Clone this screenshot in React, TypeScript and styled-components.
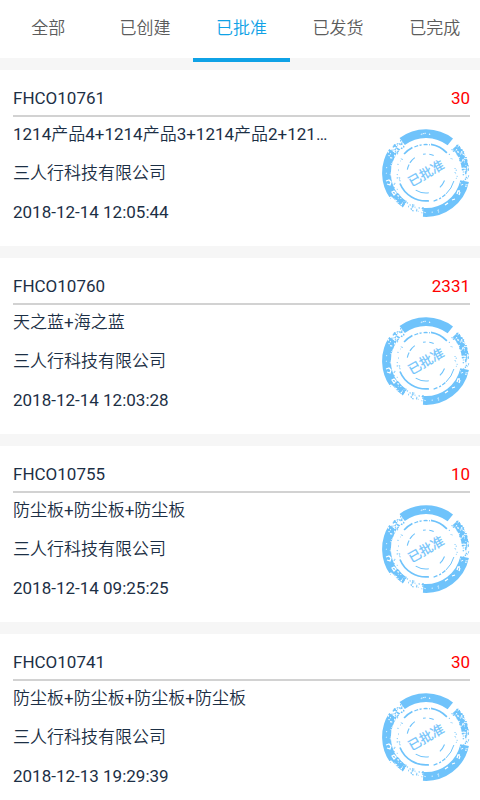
import React, { useState } from "react";
import styled, { createGlobalStyle } from "styled-components";

const GlobalStyle = createGlobalStyle`
  * { box-sizing: border-box; }
  body {
    margin: 0;
    background: #f6f6f6;
    color: #1c2f45;
    font-family: Roboto, "Noto Sans CJK SC DemiLight", "Noto Sans CJK SC Light", "Noto Sans CJK SC", sans-serif;
    font-size: 17px;
    line-height: 24px;
  }
`;

const Page = styled.main`
  overflow: hidden;
`;

const TabBar = styled.nav`
  display: grid;
  grid-template-columns: repeat(5, 1fr);
  height: 58px;
  margin-right: -3px;
  background: #fff;
`;

const Tab = styled.button<{ $active: boolean }>`
  height: 62px;
  padding: 0 0 2px;
  border: 0;
  border-bottom: 4px solid ${(p) => (p.$active ? "#0fa2e6" : "transparent")};
  background: none;
  color: ${(p) => (p.$active ? "#0fa2e6" : "#5c5c5c")};
  font: inherit;
  cursor: pointer;
`;

const OrderList = styled.ul`
  display: grid;
  gap: 12px;
  margin: 12px 0 0;
  padding: 0;
  list-style: none;
`;

const OrderCard = styled.li`
  padding: 10px 10px 22px 13px;
  background: #fff;
`;

const CardHeader = styled.header`
  display: flex;
  justify-content: space-between;
  align-items: center;
  height: 37px;
  border-bottom: 2px solid #d2d2d2;
`;

const Amount = styled.span`
  color: #f00;
`;

const CardBody = styled.div`
  display: flex;
  justify-content: space-between;
  align-items: flex-start;
`;

const Details = styled.div`
  display: grid;
  gap: 15px;
  padding-top: 5px;
`;

const Line = styled.span`
  white-space: nowrap;
`;

const StampDrawing = styled.svg`
  flex: none;
  width: 88px;
  height: 88px;
  margin-top: 12px;
`;

const StampText = styled.text`
  font-family: "Noto Sans CJK SC", sans-serif;
  font-size: 13px;
  font-weight: 400;
`;

const INK = "#6fc3fb";
const CENTER = 44;

function point(radius: number, degrees: number) {
  const a = (degrees * Math.PI) / 180;
  return [CENTER + radius * Math.cos(a), CENTER + radius * Math.sin(a)].map((n) => n.toFixed(1)).join(" ");
}

function arc(radius: number, from: number, to: number) {
  const large = to - from > 180 ? 1 : 0;
  return `M${point(radius, from)}A${radius} ${radius} 0 ${large} 1 ${point(radius, to)}`;
}

// Repeatable grains of ink scattered over a sector of a ring.
function grains(seed: number, from: number, to: number, inner: number, outer: number, count: number, max: number) {
  let state = seed;
  const next = () => {
    state = (state * 16807) % 2147483647;
    return state / 2147483647;
  };
  next();
  next();
  let d = "";
  for (let i = 0; i < count; i++) {
    const w = 0.6 + next() * max;
    const h = 0.6 + next() * max;
    const p = point(inner + next() * (outer - inner), from + next() * (to - from));
    d += `M${p}l${w.toFixed(1)} ${(h / 3).toFixed(1)}l${(-w / 3).toFixed(1)} ${h.toFixed(1)}l${(-w).toFixed(1)} ${(-h / 2).toFixed(1)}z`;
  }
  return d;
}

const solidBand = [arc(39.5, -127, -52), arc(39.5, 12, 94), arc(39.5, 144, 213)].join("");
const wornBand = [arc(39.5, -42, -4), arc(38, 124, 145)].join("");
const middleRing = [arc(29, -139, -118), arc(29, -80, -44), arc(28, 84, 158)].join("");
const middleDashes = [arc(28.5, -114, -82), arc(29, 48, 77)].join("");
const middleThin = arc(29, 16, 46);
const innerRing = [
  arc(19, -170, -153),
  arc(19, -148, -126),
  arc(19, -99, -91),
  arc(19, -80, -66),
  arc(20, 82, 121),
  arc(20, 22, 46),
].join("");

const inkGrains = [
  grains(71, -44, 12, 35, 43, 60, 1),
  grains(19, 94, 144, 34, 40, 34, 1.2),
  grains(33, 213, 233, 35, 43, 34, 1.2),
  grains(57, 165, 212, 27, 30, 12, 0.6),
  grains(83, -40, 12, 28, 31, 9, 0.6),
  grains(91, 120, 165, 33, 35, 8, 0.6),
].join("");

const bareGrains = [
  grains(11, -42, 0, 35, 44, 60, 1),
  grains(43, 124, 146, 34, 43, 16, 1.2),
  grains(65, 174, 203, 35, 43, 10, 0.6),
  grains(77, 203, 214, 35, 44, 14, 1),
  grains(27, 66, 94, 38, 41, 7, 0.6),
  grains(52, 12, 20, 35, 44, 6, 0.8),
  grains(39, -105, -80, 39, 41, 5, 0.6),
].join("");

function Stamp() {
  return (
    <StampDrawing viewBox="0 0 88 88" role="img" aria-label="已批准">
      <g fill="none" stroke={INK}>
        <path d={solidBand} strokeWidth="8.8" />
        <path d={wornBand} strokeWidth="7" />
        <path d={middleRing} strokeWidth="1.7" />
        <path d={middleDashes} strokeWidth="1.3" strokeDasharray="4 1.5 2 2" />
        <path d={middleThin} strokeWidth="1" />
        <path d={innerRing} strokeWidth="1.1" />
      </g>
      <path d={bareGrains} fill="#fff" />
      <path d={inkGrains} fill={INK} />
      <g fill="none" stroke="#fff" strokeWidth="1.3">
        <path d="M4 52l3-1 2 2-1 3-3-1M10 63l2-1 2 2-2 2zM7 69l2-1 1 2M13 71l2 1" />
        <path d="M75 65l1-3 2 0M77 66l1-3M70 71l3-1M63 76l3-2" />
      </g>
      <StampText x="44" y="49" textAnchor="middle" fill={INK} stroke={INK} strokeWidth="0.2" transform="rotate(-30 44 44)">
        已批准
      </StampText>
    </StampDrawing>
  );
}

const tabs = ["全部", "已创建", "已批准", "已发货", "已完成"];

const orders = [
  { id: "FHCO10761", amount: 30, goods: "1214产品4+1214产品3+1214产品2+121…", company: "三人行科技有限公司", time: "2018-12-14 12:05:44" },
  { id: "FHCO10760", amount: 2331, goods: "天之蓝+海之蓝", company: "三人行科技有限公司", time: "2018-12-14 12:03:28" },
  { id: "FHCO10755", amount: 10, goods: "防尘板+防尘板+防尘板", company: "三人行科技有限公司", time: "2018-12-14 09:25:25" },
  { id: "FHCO10741", amount: 30, goods: "防尘板+防尘板+防尘板+防尘板", company: "三人行科技有限公司", time: "2018-12-13 19:29:39" },
];

export default function App() {
  const [active, setActive] = useState(2);
  return (
    <Page>
      <GlobalStyle />
      <TabBar>
        {tabs.map((t, i) => (
          <Tab key={t} $active={i === active} onClick={() => setActive(i)}>
            {t}
          </Tab>
        ))}
      </TabBar>
      <OrderList>
        {orders.map((o) => (
          <OrderCard key={o.id}>
            <CardHeader>
              <span>{o.id}</span>
              <Amount>{o.amount}</Amount>
            </CardHeader>
            <CardBody>
              <Details>
                <Line>{o.goods}</Line>
                <Line>{o.company}</Line>
                <Line>{o.time}</Line>
              </Details>
              <Stamp />
            </CardBody>
          </OrderCard>
        ))}
      </OrderList>
    </Page>
  );
}
